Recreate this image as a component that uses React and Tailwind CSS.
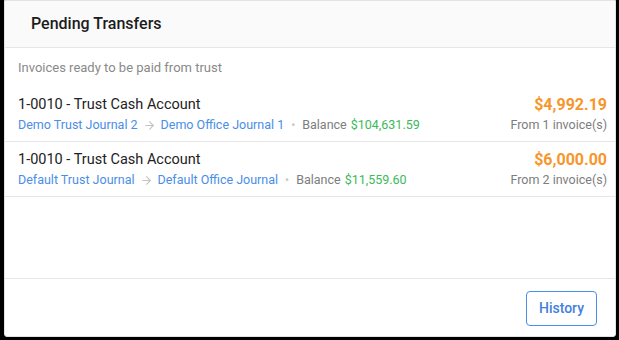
import { ArrowRight } from 'lucide-react';

const transfers = [
  {
    account: '1-0010 - Trust Cash Account',
    from: 'Demo Trust Journal 2',
    to: 'Demo Office Journal 1',
    balance: '$104,631.59',
    amount: '$4,992.19',
    invoices: 1,
  },
  {
    account: '1-0010 - Trust Cash Account',
    from: 'Default Trust Journal',
    to: 'Default Office Journal',
    balance: '$11,559.60',
    amount: '$6,000.00',
    invoices: 2,
  },
];

export default function App() {
  return (
    <div className="w-[619px] h-[340px] bg-black pl-[4px] pr-[3px] pb-[3px] font-['Roboto',sans-serif]">
      <div className="h-full bg-white border border-[#e3e3e3] rounded-b-[3px] flex flex-col">
        <div className="h-[47px] shrink-0 bg-[#fafafa] border-b border-[#e6e6e6] flex items-center pl-[26px]">
          <h2 className="text-[16px] font-medium text-[#1c1c1c]">Pending Transfers</h2>
        </div>

        <div className="flex-1">
          <p className="pl-[13px] pt-[12px] pb-[11px] text-[13px] leading-[16px] text-[#8a8a8a]">
            Invoices ready to be paid from trust
          </p>
          {transfers.map((t, i) => (
            <div key={i} className="flex justify-between pl-[13px] pr-[8px] pt-[8px] pb-[7px] border-b border-[#e6e6e6]">
              <div className="flex flex-col gap-[1px]">
                <div className="text-[14.5px] leading-[20px] text-[#222]">{t.account}</div>
                <div className="flex items-center text-[12.5px] leading-[18px]">
                  <span className="text-[#4a8ee6]">{t.from}</span>
                  <ArrowRight size={13} strokeWidth={2} className="text-[#c4c4c4] mx-[5px]" />
                  <span className="text-[#4a8ee6]">{t.to}</span>
                  <span className="text-[#c8c8c8] mx-[7px] text-[12px]">•</span>
                  <span className="text-[#7d7d7d]">Balance</span>
                  <span className="text-[#3cb95b] ml-[4px]">{t.balance}</span>
                </div>
              </div>
              <div className="flex flex-col items-end gap-[1px]">
                <div className="text-[16px] leading-[20px] font-bold text-[#f7962a]">{t.amount}</div>
                <div className="text-[12.5px] leading-[18px] text-[#7d7d7d]">From {t.invoices} invoice(s)</div>
              </div>
            </div>
          ))}
        </div>

        <div className="h-[58px] shrink-0 border-t border-[#e6e6e6] flex items-start justify-end pt-[12px] pr-[18px]">
          <button className="w-[71px] h-[35px] border border-[#4a8ee6] rounded-[4px] text-[14px] font-medium text-[#3f82dc] bg-white">
            History
          </button>
        </div>
      </div>
    </div>
  );
}
